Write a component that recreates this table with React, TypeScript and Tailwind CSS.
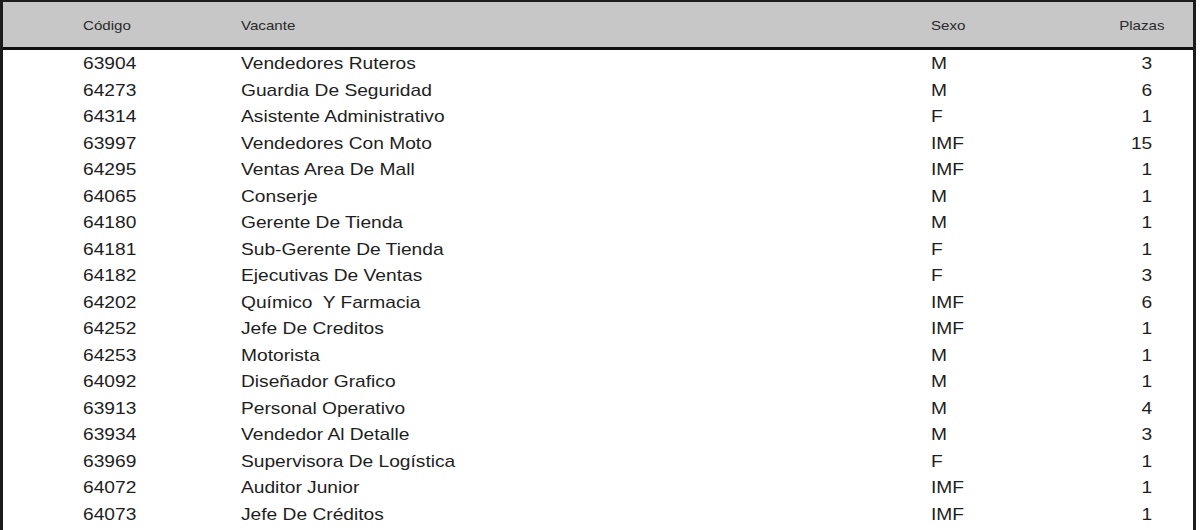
const rows: [string, string, string, string][] = [
  ['63904', 'Vendedores Ruteros', 'M', '3'],
  ['64273', 'Guardia De Seguridad', 'M', '6'],
  ['64314', 'Asistente Administrativo', 'F', '1'],
  ['63997', 'Vendedores Con Moto', 'IMF', '15'],
  ['64295', 'Ventas Area De Mall', 'IMF', '1'],
  ['64065', 'Conserje', 'M', '1'],
  ['64180', 'Gerente De Tienda', 'M', '1'],
  ['64181', 'Sub-Gerente De Tienda', 'F', '1'],
  ['64182', 'Ejecutivas De Ventas', 'F', '3'],
  ['64202', 'Químico  Y Farmacia', 'IMF', '6'],
  ['64252', 'Jefe De Creditos', 'IMF', '1'],
  ['64253', 'Motorista', 'M', '1'],
  ['64092', 'Diseñador Grafico', 'M', '1'],
  ['63913', 'Personal Operativo', 'M', '4'],
  ['63934', 'Vendedor Al Detalle', 'M', '3'],
  ['63969', 'Supervisora De Logística', 'F', '1'],
  ['64072', 'Auditor Junior', 'IMF', '1'],
  ['64073', 'Jefe De Créditos', 'IMF', '1'],
]

function Cell({ children, right }: { children: React.ReactNode; right?: boolean }) {
  return (
    <span
      className={`inline-block whitespace-pre scale-x-[1.17] ${right ? 'origin-right' : 'origin-left'}`}
    >
      {children}
    </span>
  )
}

function HeadCell({ children, right }: { children: React.ReactNode; right?: boolean }) {
  return (
    <span
      className={`inline-block whitespace-pre scale-x-[1.12] ${right ? 'origin-right' : 'origin-left'}`}
    >
      {children}
    </span>
  )
}

export default function App() {
  return (
    <div
      className="w-[1200px] h-[530px] bg-white overflow-hidden"
      style={{ fontFamily: '"Liberation Sans", Arial, sans-serif' }}
    >
      <div className="w-[1196px] h-full border-l-[3px] border-r-[3px] border-t-2 border-[#1c1c1c]">
        {/* Header */}
        <div className="h-[48px] pt-[4px] bg-[#c7c7c7] border-b-[3px] border-[#111] flex items-center text-[13.5px] text-[#2a2a2a]">
          <div className="w-[238px] pl-[80px]">
            <HeadCell>Código</HeadCell>
          </div>
          <div className="w-[690px]">
            <HeadCell>Vacante</HeadCell>
          </div>
          <div className="flex-1">
            <HeadCell>Sexo</HeadCell>
          </div>
          <div className="pr-[28px] text-right">
            <HeadCell right>Plazas</HeadCell>
          </div>
        </div>

        {/* Rows */}
        <div className="text-[16.4px] text-[#1e1e1e]">
          {rows.map(([code, name, sex, qty]) => (
            <div key={code} className="h-[26.5px] leading-[26.5px] flex">
              <div className="w-[238px] pl-[80px]">
                <Cell>{code}</Cell>
              </div>
              <div className="w-[690px]">
                <Cell>{name}</Cell>
              </div>
              <div className="flex-1">
                <Cell>{sex}</Cell>
              </div>
              <div className="pr-[41px] text-right">
                <Cell right>{qty}</Cell>
              </div>
            </div>
          ))}
        </div>
      </div>
    </div>
  )
}
